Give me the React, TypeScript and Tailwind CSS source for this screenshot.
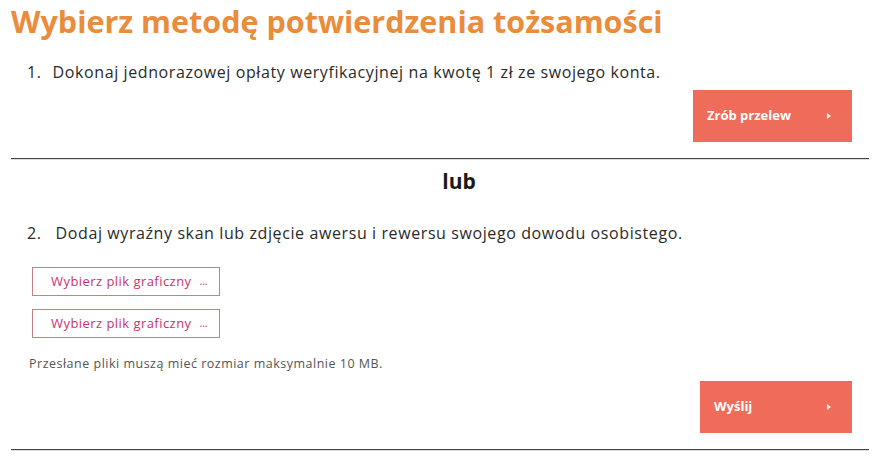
import React from 'react';

const Arrow = () => (
  <svg width="6" height="8" viewBox="0 0 6 8" className="fill-white/90">
    <path d="M1 1 L5 4 L1 7 Z" />
  </svg>
);

const ActionButton = ({ label, width }: { label: string; width: string }) => (
  <button
    className={`${width} h-[52px] bg-[#ee6c59] text-white text-[13px] font-bold flex items-center justify-between pl-[14px] pr-[20px]`}
  >
    <span>{label}</span>
    <Arrow />
  </button>
);

const FileButton = () => (
  <button className="w-[188px] h-[29px] border border-[#c98080] text-[#c8336e] text-[13px] tracking-[0.45px] flex items-center pl-[18px]">
    Wybierz plik graficzny
    <span className="ml-[8px] text-[11px] tracking-tight">...</span>
  </button>
);

export default function App() {
  return (
    <div
      className="w-[875px] h-[460px] bg-white px-[11px] pr-[6px] text-[#2a2a2a]"
      style={{ fontFamily: '"Open Sans", "Liberation Sans", sans-serif' }}
    >
      <h1 className="text-[30.5px] leading-[38px] font-bold text-[#e98d3d] pt-[2px]">
        Wybierz metodę potwierdzenia tożsamości
      </h1>

      <div className="flex items-center gap-[11px] pl-[16px] mt-[20px] text-[16px] tracking-[0.6px] leading-[24px]">
        <span>1.</span>
        <span>Dokonaj jednorazowej opłaty weryfikacyjnej na kwotę 1 zł ze swojego konta.</span>
      </div>

      <div className="flex justify-end pr-[17px] mt-[6px]">
        <ActionButton label="Zrób przelew" width="w-[159px]" />
      </div>

      <div className="mt-[16px] border-t border-[#444] shadow-[0_1px_0_#ddd]" />

      <div className="text-center text-[21px] font-bold leading-[28px] mt-[8px] pl-[38px] text-[#1a1a1a]">lub</div>

      <div className="flex items-center gap-[14px] pl-[16px] mt-[26px] text-[16px] tracking-[0.6px] leading-[24px]">
        <span>2.</span>
        <span>Dodaj wyraźny skan lub zdjęcie awersu i rewersu swojego dowodu osobistego.</span>
      </div>

      <div className="flex flex-col gap-[13px] pl-[21px] mt-[22px]">
        <FileButton />
        <FileButton />
      </div>

      <p className="text-[12.5px] tracking-[0.5px] text-[#555] pl-[18px] mt-[18px] leading-[16px]">
        Przesłane pliki muszą mieć rozmiar maksymalnie 10 MB.
      </p>

      <div className="flex justify-end pr-[17px] mt-[9px]">
        <ActionButton label="Wyślij" width="w-[152px]" />
      </div>

      <div className="mt-[16px] border-t border-[#444] shadow-[0_1px_0_#ddd]" />
    </div>
  );
}
